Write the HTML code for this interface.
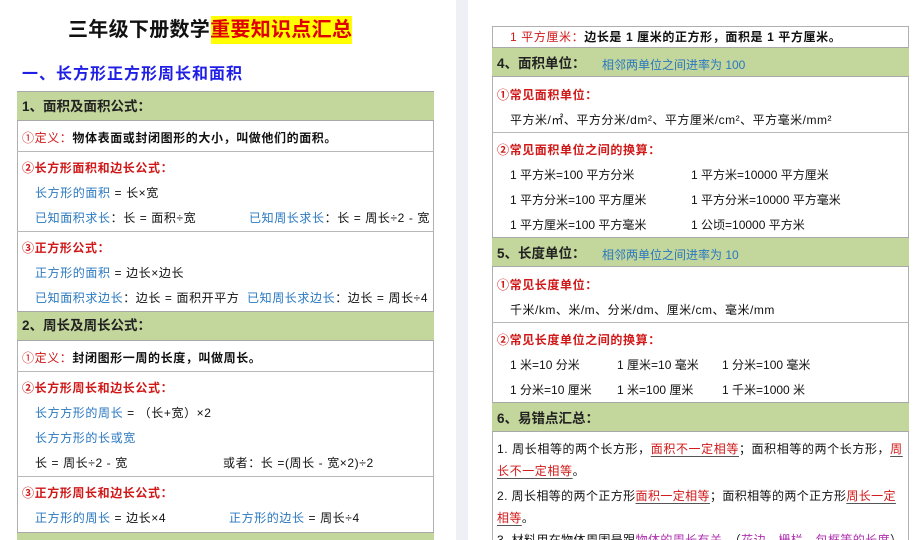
<!DOCTYPE html>
<html><head><meta charset="utf-8"><style>
*{margin:0;padding:0;box-sizing:border-box}
html,body{width:916px;height:540px;overflow:hidden}
body{background:#fff;position:relative;font-family:"Liberation Sans","Noto Sans CJK SC",sans-serif;color:#111}
.a{position:absolute;white-space:nowrap;font-size:12px;line-height:14px}
.r{color:#d01818}.b{color:#2a78c0}
.bx{position:absolute;border:1px solid #b0b0b0;background:#fff}
.g{position:absolute;background:#c3d69b;border-top:1px solid #a8a8a8;border-bottom:1px solid #a8a8a8}
.h{font-size:13.5px;font-weight:bold;color:#222}
.ln{position:absolute;height:1px;background:#b8b8b8}
.u{text-decoration:underline;text-decoration-color:#555;text-underline-offset:3px}
.bd{font-weight:bold}
.sp{letter-spacing:0.6px}
</style></head><body>
<div style="position:absolute;left:456px;top:0;width:12px;height:540px;background:#eef0f5"></div>

<!-- LEFT -->
<div style="position:absolute;left:211px;top:16px;width:141px;height:28px;background:#ffff00"></div>
<div class="a" style="left:68px;top:18px;font-size:20px;line-height:24px;font-weight:bold;letter-spacing:0.3px">三年级下册数学<span style="color:#e00000">重要知识点汇总</span></div>
<div class="a" style="left:22px;top:66px;font-size:16px;line-height:18px;font-weight:bold;color:#1e1ee6;letter-spacing:1px">一、长方形正方形周长和面积</div>

<div class="bx" style="left:17px;top:91px;width:417px;height:460px"></div>
<div class="g" style="left:17px;top:91px;width:417px;height:30px"></div>
<div class="a h" style="left:22px;top:100px">1、面积及面积公式：</div>
<div class="a sp" style="left:22px;top:131px"><span class="r">①定义：</span><span class="bd">物体表面或封闭图形的大小，叫做他们的面积。</span></div>
<div class="ln" style="left:17px;top:151px;width:417px"></div>
<div class="a r bd sp" style="left:22px;top:161px">②长方形面积和边长公式：</div>
<div class="a sp" style="left:35px;top:186px"><span class="b">长方形的面积</span> = 长×宽</div>
<div class="a sp" style="left:35px;top:211px"><span class="b">已知面积求长</span>：长 = 面积÷宽</div>
<div class="a sp" style="left:249px;top:211px"><span class="b">已知周长求长</span>：长 = 周长÷2 - 宽</div>
<div class="ln" style="left:17px;top:231px;width:417px"></div>
<div class="a r bd sp" style="left:22px;top:241px">③正方形公式：</div>
<div class="a sp" style="left:35px;top:266px"><span class="b">正方形的面积</span> = 边长×边长</div>
<div class="a sp" style="left:35px;top:291px"><span class="b">已知面积求边长</span>：边长 = 面积开平方</div>
<div class="a sp" style="left:247px;top:291px"><span class="b">已知周长求边长</span>：边长 = 周长÷4</div>
<div class="g" style="left:17px;top:311px;width:417px;height:30px"></div>
<div class="a h" style="left:22px;top:319px">2、周长及周长公式：</div>
<div class="a sp" style="left:22px;top:351px"><span class="r">①定义：</span><span class="bd">封闭图形一周的长度，叫做周长。</span></div>
<div class="ln" style="left:17px;top:371px;width:417px"></div>
<div class="a r bd sp" style="left:22px;top:381px">②长方形周长和边长公式：</div>
<div class="a sp" style="left:35px;top:406px"><span class="b">长方方形的周长</span> = （长+宽）×2</div>
<div class="a b sp" style="left:35px;top:431px">长方方形的长或宽</div>
<div class="a sp" style="left:35px;top:456px">长 = 周长÷2 - 宽</div>
<div class="a sp" style="left:223px;top:456px">或者：长 =(周长 - 宽×2)÷2</div>
<div class="ln" style="left:17px;top:476px;width:417px"></div>
<div class="a r bd sp" style="left:22px;top:486px">③正方形周长和边长公式：</div>
<div class="a sp" style="left:35px;top:511px"><span class="b">正方形的周长</span> = 边长×4</div>
<div class="a sp" style="left:229px;top:511px"><span class="b">正方形的边长</span> = 周长÷4</div>
<div class="g" style="left:17px;top:532px;width:417px;height:30px"></div>

<!-- RIGHT -->
<div class="bx" style="left:492px;top:26px;width:417px;height:530px"></div>
<div class="a sp" style="left:510px;top:30px"><span class="r">1 平方厘米：</span><span class="bd">边长是 1 厘米的正方形，面积是 1 平方厘米。</span></div>
<div class="g" style="left:492px;top:47px;width:417px;height:30px"></div>
<div class="a h" style="left:497px;top:57px">4、面积单位：</div>
<div class="a b" style="left:602px;top:58px">相邻两单位之间进率为 100</div>
<div class="a r bd sp" style="left:497px;top:88px">①常见面积单位：</div>
<div class="a" style="left:510px;top:113px;letter-spacing:0.5px">平方米/㎡、平方分米/dm²、平方厘米/cm²、平方毫米/mm²</div>
<div class="ln" style="left:492px;top:132px;width:417px"></div>
<div class="a r bd sp" style="left:497px;top:143px">②常见面积单位之间的换算：</div>
<div class="a" style="left:510px;top:168px">1 平方米=100 平方分米</div>
<div class="a" style="left:691px;top:168px">1 平方米=10000 平方厘米</div>
<div class="a" style="left:510px;top:193px">1 平方分米=100 平方厘米</div>
<div class="a" style="left:691px;top:193px">1 平方分米=10000 平方毫米</div>
<div class="a" style="left:510px;top:218px">1 平方厘米=100 平方毫米</div>
<div class="a" style="left:691px;top:218px">1 公顷=10000 平方米</div>
<div class="g" style="left:492px;top:237px;width:417px;height:30px"></div>
<div class="a h" style="left:497px;top:247px">5、长度单位：</div>
<div class="a b" style="left:602px;top:248px">相邻两单位之间进率为 10</div>
<div class="a r bd sp" style="left:497px;top:278px">①常见长度单位：</div>
<div class="a" style="left:510px;top:303px;letter-spacing:0.5px">千米/km、米/m、分米/dm、厘米/cm、毫米/mm</div>
<div class="ln" style="left:492px;top:322px;width:417px"></div>
<div class="a r bd sp" style="left:497px;top:333px">②常见长度单位之间的换算：</div>
<div class="a" style="left:510px;top:358px">1 米=10 分米</div>
<div class="a" style="left:617px;top:358px">1 厘米=10 毫米</div>
<div class="a" style="left:722px;top:358px">1 分米=100 毫米</div>
<div class="a" style="left:510px;top:383px">1 分米=10 厘米</div>
<div class="a" style="left:617px;top:383px">1 米=100 厘米</div>
<div class="a" style="left:722px;top:383px">1 千米=1000 米</div>
<div class="g" style="left:492px;top:402px;width:417px;height:30px"></div>
<div class="a h" style="left:497px;top:412px">6、易错点汇总：</div>
<div class="a" style="left:497px;top:442px;letter-spacing:0.6px">1. 周长相等的两个长方形，<span class="r u">面积不一定相等</span>；面积相等的两个长方形，<span class="r u">周</span></div>
<div class="a" style="left:497px;top:464px;letter-spacing:0.6px"><span class="r u">长不一定相等</span>。</div>
<div class="a" style="left:497px;top:489px;letter-spacing:0.4px">2. 周长相等的两个正方形<span class="r u">面积一定相等</span>；面积相等的两个正方形<span class="r u">周长一定</span></div>
<div class="a" style="left:497px;top:511px;letter-spacing:0.4px"><span class="r u">相等</span>。</div>
<div class="a" style="left:497px;top:533px;letter-spacing:0.4px">3. 材料用在物体周围是跟<span style="color:#b030b0">物体的周长有关</span>。（<span style="color:#b030b0">花边、栅栏、包框等的长度</span>）</div>
</body></html>
